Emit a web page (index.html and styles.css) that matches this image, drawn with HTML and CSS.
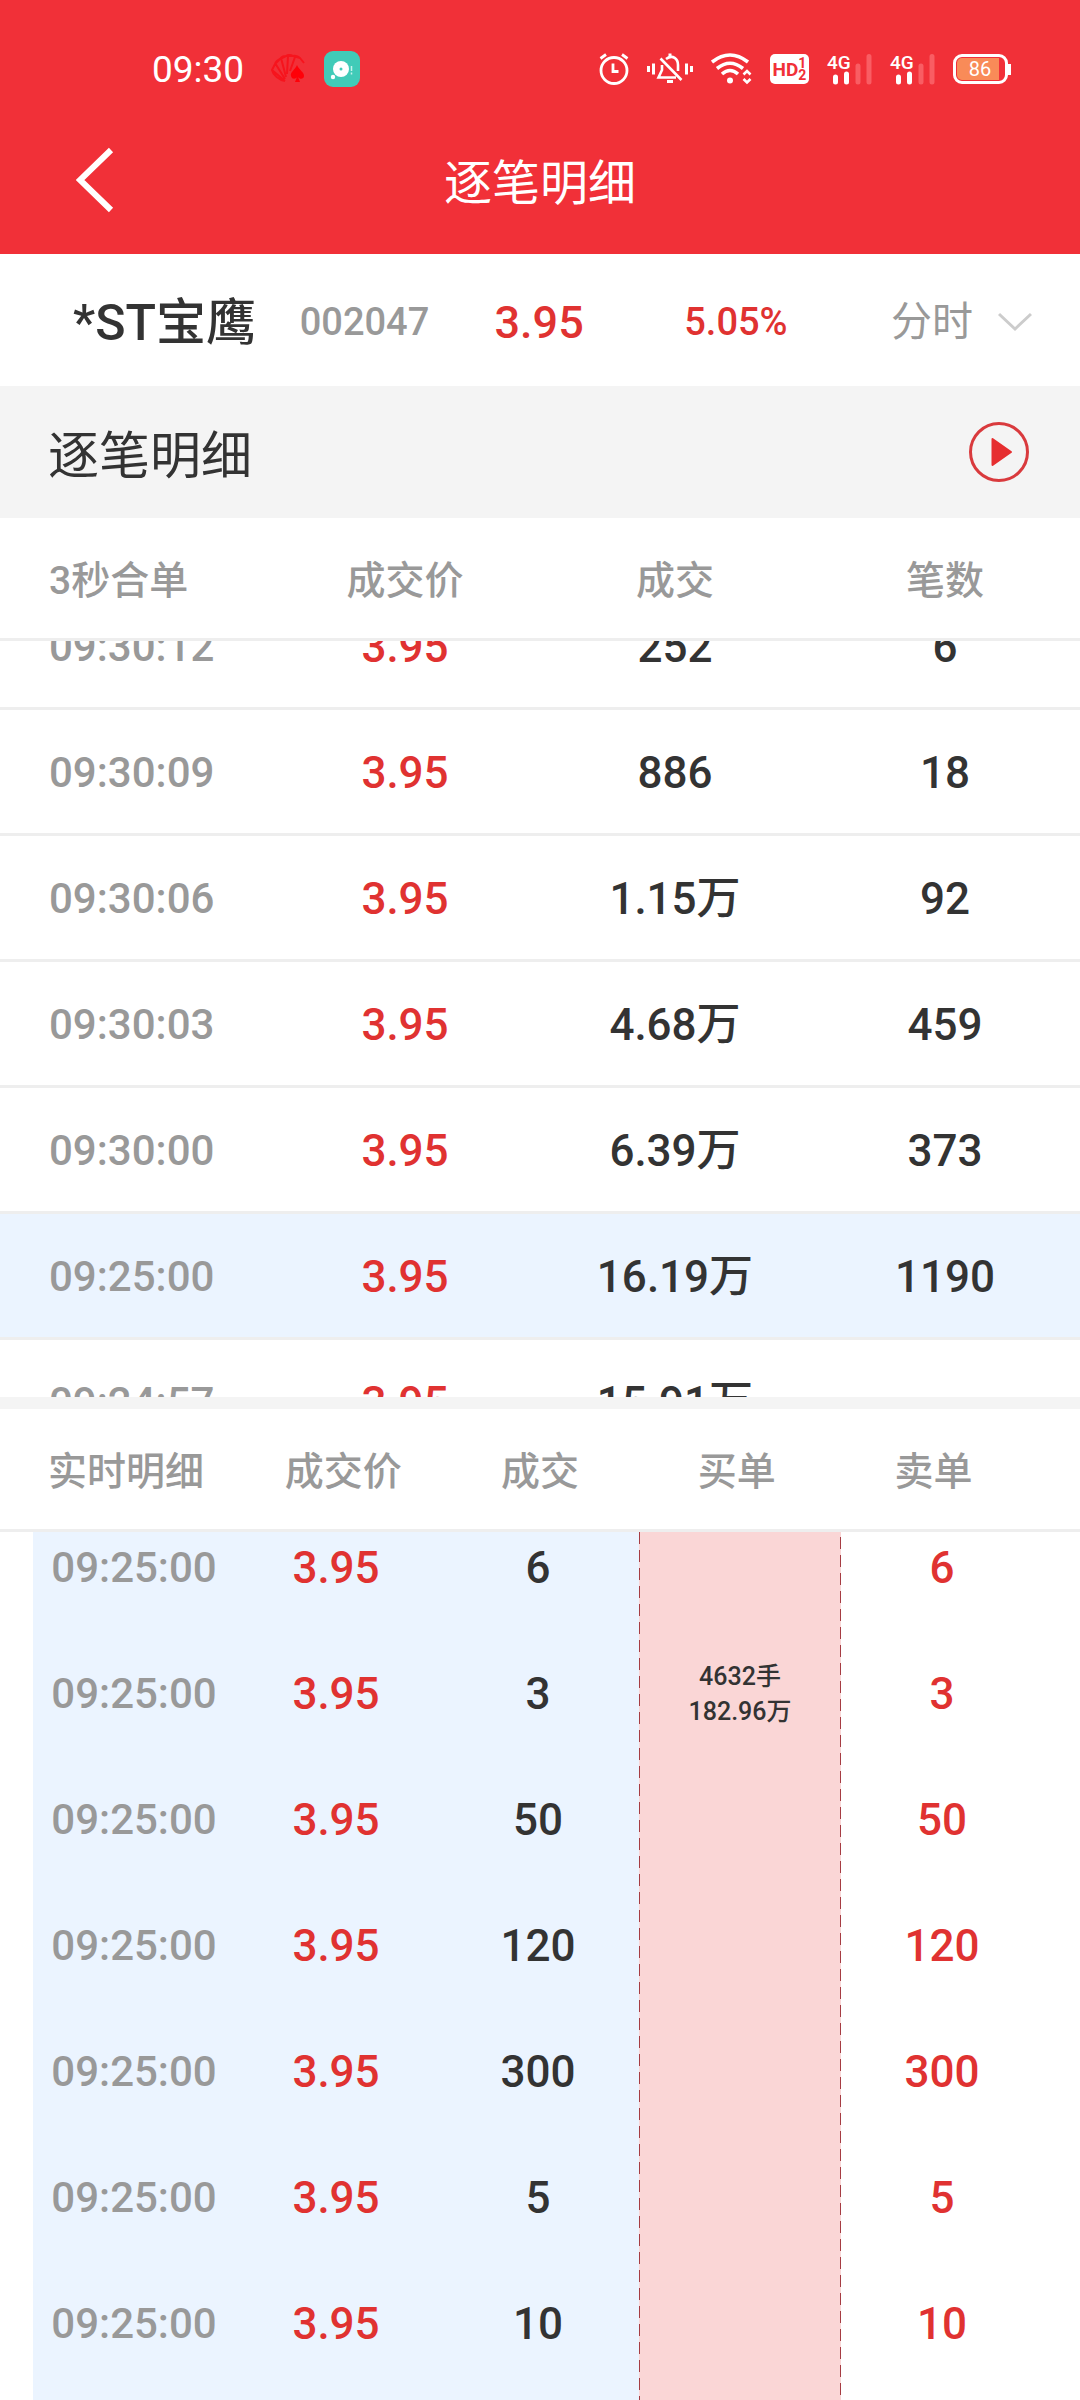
FILE: index.html
```html
<!DOCTYPE html>
<html lang="zh-CN">
<head>
<meta charset="UTF-8">
<meta name="viewport" content="width=device-width, initial-scale=1.0">
<title>逐笔明细</title>
<link rel="stylesheet" href="styles.css">
</head>
<body>
<header class="top">
  <div class="status">
    <span class="clock">09:30</span>
    <svg class="fan" width="34" height="30" viewBox="0 0 34 30" aria-hidden="true">
      <path d="M14 27C8 26 2 21 1 16L4 10L9 5L15 2L22 2L29 4L33 9M14 27L1 16M14 25L4 9M15 23L10 4M16 20L17 2M19 17L24 3M4 10Q5 7 9 5Q11 2 15 2Q18 0 22 2Q26 1 29 4" fill="none" stroke="#f6141d" stroke-width="2"/>
      <path d="M26 11C24 16 19 18 20 22C21 26 25 25 26 23L24 28H29L27 23C29 26 33 25 33 22C33 18 28 16 26 11Z" fill="#ff0008"/>
    </svg>
    <svg class="app" width="36" height="36" viewBox="0 0 36 36" aria-hidden="true">
      <rect width="36" height="36" rx="9" fill="#41cbb8"/>
      <circle cx="17" cy="18" r="8" fill="#fff"/>
      <circle cx="17" cy="18" r="1.500" fill="#41cbb8"/>
      <circle cx="9" cy="26" r="2.200" fill="#fff"/>
      <path d="M27.500 15v5M27.500 21.500v2" stroke="#c8f2ec" stroke-width="1.500"/>
    </svg>
    <div class="status-icons">
      <svg width="30" height="32" viewBox="0 0 30 32" fill="none" stroke="#fff" aria-hidden="true">
        <circle cx="15" cy="17.500" r="13" stroke-width="2.800"/>
        <path d="M14 10.500V18.500H19.500" stroke-width="2.800"/>
        <path d="M1.500 5.500L7 1.500M28.500 5.500L23 1.500" stroke-width="2.800"/>
      </svg>
      <svg width="46" height="32" viewBox="0 0 46 32" fill="none" stroke="#fff" stroke-width="3" aria-hidden="true">
        <path d="M1.500 13v6M6.500 10.500v11M39.500 10.500v11M44.500 13v6"/>
        <path d="M19 6C26 1 31 6 31 12V18M15 12V17L11.500 24.500H29M13.500 5.500L34.500 27" stroke-width="2.600"/>
        <path d="M23 0.500v3M20 28.500h6" stroke-width="3"/>
      </svg>
      <svg width="41" height="32" viewBox="0 0 41 32" fill="none" stroke="#fff" stroke-width="3.600" aria-hidden="true">
        <path d="M1 9Q19 -5 37 9M6 15.500Q19 5 32 15.500M11 21Q19 14 27 21"/>
        <circle cx="19" cy="27.500" r="3" fill="#fff" stroke="none"/>
        <path d="M32.500 21.500L36 18L39.500 21.500M32.500 26L36 29.500L39.500 26" stroke-width="2.600"/>
      </svg>
      <span class="hd">HD<span class="hd-num"><span>1</span><span>2</span></span></span>
      <span class="signal">
        <span class="signal-type">4G</span>
        <svg width="45" height="32" viewBox="0 0 45 32" aria-hidden="true">
          <path d="M8.500 24v5M19.500 21v8" stroke="#fff" stroke-width="5" stroke-linecap="round"/>
          <path d="M31 13v16M42 3.500v25.500" stroke="#f95d63" stroke-width="5" stroke-linecap="round"/>
        </svg>
      </span>
      <span class="signal">
        <span class="signal-type">4G</span>
        <svg width="45" height="32" viewBox="0 0 45 32" aria-hidden="true">
          <path d="M8.500 24v5M19.500 21v8" stroke="#fff" stroke-width="5" stroke-linecap="round"/>
          <path d="M31 13v16M42 3.500v25.500" stroke="#f95d63" stroke-width="5" stroke-linecap="round"/>
        </svg>
      </span>
      <span class="battery"><span class="battery-level">86</span></span>
    </div>
  </div>
  <nav class="nav">
    <button type="button" class="back" aria-label="返回">
      <svg width="38" height="66" viewBox="0 0 38 66" fill="none" stroke="#fff" stroke-width="6" aria-hidden="true">
        <path d="M35 3L4 33L35 63"/>
      </svg>
    </button>
    <h1>逐笔明细</h1>
  </nav>
</header>

<section class="quote">
  <h2 class="name">*ST宝鹰</h2>
  <span class="code">002047</span>
  <span class="price">3.95</span>
  <span class="change">5.05%</span>
  <label class="period">
    <select aria-label="周期">
      <option>分时</option>
    </select>
    <svg width="34" height="20" viewBox="0 0 34 20" fill="none" stroke="#ccc" stroke-width="3" aria-hidden="true">
      <path d="M1 2L17 17L33 2"/>
    </svg>
  </label>
</section>

<section class="title-bar">
  <h2>逐笔明细</h2>
  <button type="button" class="play" aria-label="播放">
    <svg width="60" height="60" viewBox="0 0 60 60" aria-hidden="true">
      <circle cx="30" cy="30" r="28.500" fill="none" stroke="#d93a3d" stroke-width="3"/>
      <path d="M23.500 17L42 30L23.500 43Z" fill="#e62e30" stroke="#e62e30" stroke-width="2" stroke-linejoin="round"/>
    </svg>
  </button>
</section>

<div class="head ticks-head">
  <span>3秒合单</span><span>成交价</span><span>成交</span><span>笔数</span>
</div>
<div class="ticks-view">
  <table class="ticks">
    <tr><td class="time">09:30:12</td><td class="up">3.95</td><td>252</td><td>6</td></tr>
    <tr><td class="time">09:30:09</td><td class="up">3.95</td><td>886</td><td>18</td></tr>
    <tr><td class="time">09:30:06</td><td class="up">3.95</td><td>1.15万</td><td>92</td></tr>
    <tr><td class="time">09:30:03</td><td class="up">3.95</td><td>4.68万</td><td>459</td></tr>
    <tr><td class="time">09:30:00</td><td class="up">3.95</td><td>6.39万</td><td>373</td></tr>
    <tr class="active"><td class="time">09:25:00</td><td class="up">3.95</td><td>16.19万</td><td>1190</td></tr>
    <tr><td class="time">09:24:57</td><td class="up">3.95</td><td>15.91万</td><td></td></tr>
  </table>
</div>

<div class="head orders-head">
  <span>实时明细</span><span>成交价</span><span>成交</span><span>买单</span><span>卖单</span>
</div>
<div class="orders-view">
  <table class="orders">
    <tr><td class="time">09:25:00</td><td class="up">3.95</td><td>6</td><td class="buy"></td><td class="sell">6</td></tr>
    <tr><td class="time">09:25:00</td><td class="up">3.95</td><td>3</td><td class="buy">4632手<br>182.96万</td><td class="sell">3</td></tr>
    <tr><td class="time">09:25:00</td><td class="up">3.95</td><td>50</td><td class="buy"></td><td class="sell">50</td></tr>
    <tr><td class="time">09:25:00</td><td class="up">3.95</td><td>120</td><td class="buy"></td><td class="sell">120</td></tr>
    <tr><td class="time">09:25:00</td><td class="up">3.95</td><td>300</td><td class="buy"></td><td class="sell">300</td></tr>
    <tr><td class="time">09:25:00</td><td class="up">3.95</td><td>5</td><td class="buy"></td><td class="sell">5</td></tr>
    <tr><td class="time">09:25:00</td><td class="up">3.95</td><td>10</td><td class="buy"></td><td class="sell">10</td></tr>
  </table>
</div>
</body>
</html>
```
FILE: styles.css
```css
* {
    box-sizing: border-box;
}

body {
    margin: 0;
    height: 100vh;
    display: flex;
    flex-direction: column;
    overflow: hidden;
    background-color: #fff;
    color: #333;
    font-family: Roboto, "Noto Sans CJK SC", sans-serif;
}

h1,
h2 {
    margin: 0;
}

button {
    border: none;
    background: none;
    padding: 0;
    cursor: pointer;
}

svg {
    display: block;
}

/* Red header: status line and navigation */
.top {
    background-color: #f13038;
    color: #fff;
}

.status {
    display: flex;
    align-items: center;
    height: 106px;
    padding: 32px 69px 0 152px;
}

.clock {
    font-size: 37px;
}

.fan {
    margin-left: 27px;
}

.app {
    margin-left: 19px;
}

.status-icons {
    display: flex;
    align-items: center;
    gap: 18px;
    margin-left: auto;
}

.hd {
    display: flex;
    align-items: center;
    justify-content: center;
    width: 39px;
    height: 30px;
    border-radius: 5px;
    background-color: #fff;
    color: #f13038;
    font-size: 19px;
    font-weight: 700;
}

.hd-num {
    display: flex;
    flex-direction: column;
    font-size: 14px;
    line-height: 12px;
}

.signal {
    position: relative;
}

.signal-type {
    position: absolute;
    left: 0;
    top: 0;
    font-size: 19px;
    font-weight: 500;
    line-height: 20px;
}

.battery {
    position: relative;
    width: 55px;
    height: 30px;
    margin-right: 3px;
    padding: 1px;
    border: 3px solid #fff;
    border-radius: 9px;
}

.battery::after {
    content: "";
    position: absolute;
    right: -6px;
    top: 7px;
    width: 3px;
    height: 11px;
    background-color: #fff;
}

.battery-level {
    display: block;
    width: 42px;
    height: 22px;
    padding-left: 4px;
    border-radius: 5px 0 0 5px;
    background-color: #f98b58;
    font-size: 20px;
    line-height: 22px;
    text-align: center;
}

.nav {
    display: grid;
    grid-template-columns: 1fr auto 1fr;
    align-items: center;
    height: 148px;
    padding: 0 76px;
}

.nav h1 {
    padding-top: 8px;
    font-size: 48px;
    font-weight: 400;
    line-height: 64px;
}

.back {
    justify-self: start;
}

/* Stock summary */
.quote {
    display: grid;
    grid-template-columns: 227fr 195fr 190fr 207fr auto;
    align-items: center;
    height: 132px;
    padding: 4px 48px 0 73px;
    white-space: nowrap;
}

.name {
    padding-bottom: 8px;
    font-size: 50px;
    font-weight: 500;
}

.code {
    color: #999;
    font-size: 38px;
    font-weight: 500;
}

.price {
    color: #e03231;
    font-size: 45px;
    font-weight: 500;
}

.change {
    color: #e03231;
    font-size: 38px;
    font-weight: 500;
}

.period {
    display: flex;
    align-items: center;
    gap: 25px;
}

.period select {
    appearance: none;
    border: none;
    margin: 0;
    padding: 0;
    background: none;
    color: #999;
    font-family: inherit;
    font-size: 41px;
}

.title-bar {
    display: flex;
    align-items: center;
    justify-content: space-between;
    height: 132px;
    padding: 0 51px 0 48px;
    background-color: #f4f4f4;
}

.title-bar h2 {
    font-size: 51px;
    font-weight: 400;
}

/* Column headings */
.head {
    display: grid;
    align-items: center;
    height: 123px;
    padding-bottom: 3px;
    border-bottom: 3px solid #eee;
    color: #999;
    font-size: 39px;
    font-weight: 500;
    text-align: center;
}

.head span:first-child {
    text-align: left;
}

.ticks-head {
    grid-template-columns: repeat(4, 1fr);
}

.ticks-head span:first-child {
    padding-left: 49px;
}

.orders-head {
    grid-template-columns: repeat(5, 1fr);
    padding-left: 48px;
    padding-right: 48px;
}

table {
    width: 100%;
    border-spacing: 0;
    table-layout: fixed;
    font-size: 44px;
    font-weight: 500;
    line-height: 60px;
    text-align: center;
}

td {
    height: 126px;
    padding: 0;
}

.time {
    color: #999;
    font-size: 42px;
}

.up,
.sell {
    color: #e03231;
}

/* Scrolled list, the first and last rows are cut off */
.ticks-view {
    height: 768px;
    overflow: hidden;
    border-bottom: 12px solid #f4f4f4;
}

.ticks {
    margin-top: -57px;
}

.ticks td {
    padding-top: 2px;
    border-bottom: 3px solid #eee;
}

.ticks .time {
    padding-left: 49px;
    text-align: left;
}

.active {
    background-color: #ebf4ff;
}

.orders-view {
    flex: 1;
    min-height: 0;
    overflow: hidden;
    padding: 0 37px 0 33px;
}

.orders {
    margin-top: -27px;
}

.orders td {
    background-color: #ebf4ff;
}

.orders tr:last-child td {
    height: 140px;
    padding-bottom: 14px;
}

.orders .sell {
    background-color: #fff;
}

/* Dashed lines run on from row to row: 126px is seven dashes */
.orders .buy {
    background-color: #fad6d6;
    background-image: linear-gradient(#a63c42 12px, transparent 12px), linear-gradient(#a63c42 12px, transparent 12px);
    background-position: 0 9px, 100% 14px;
    background-size: 1px 18px;
    background-repeat: repeat-y;
    font-size: 25px;
    line-height: 35px;
}
```
